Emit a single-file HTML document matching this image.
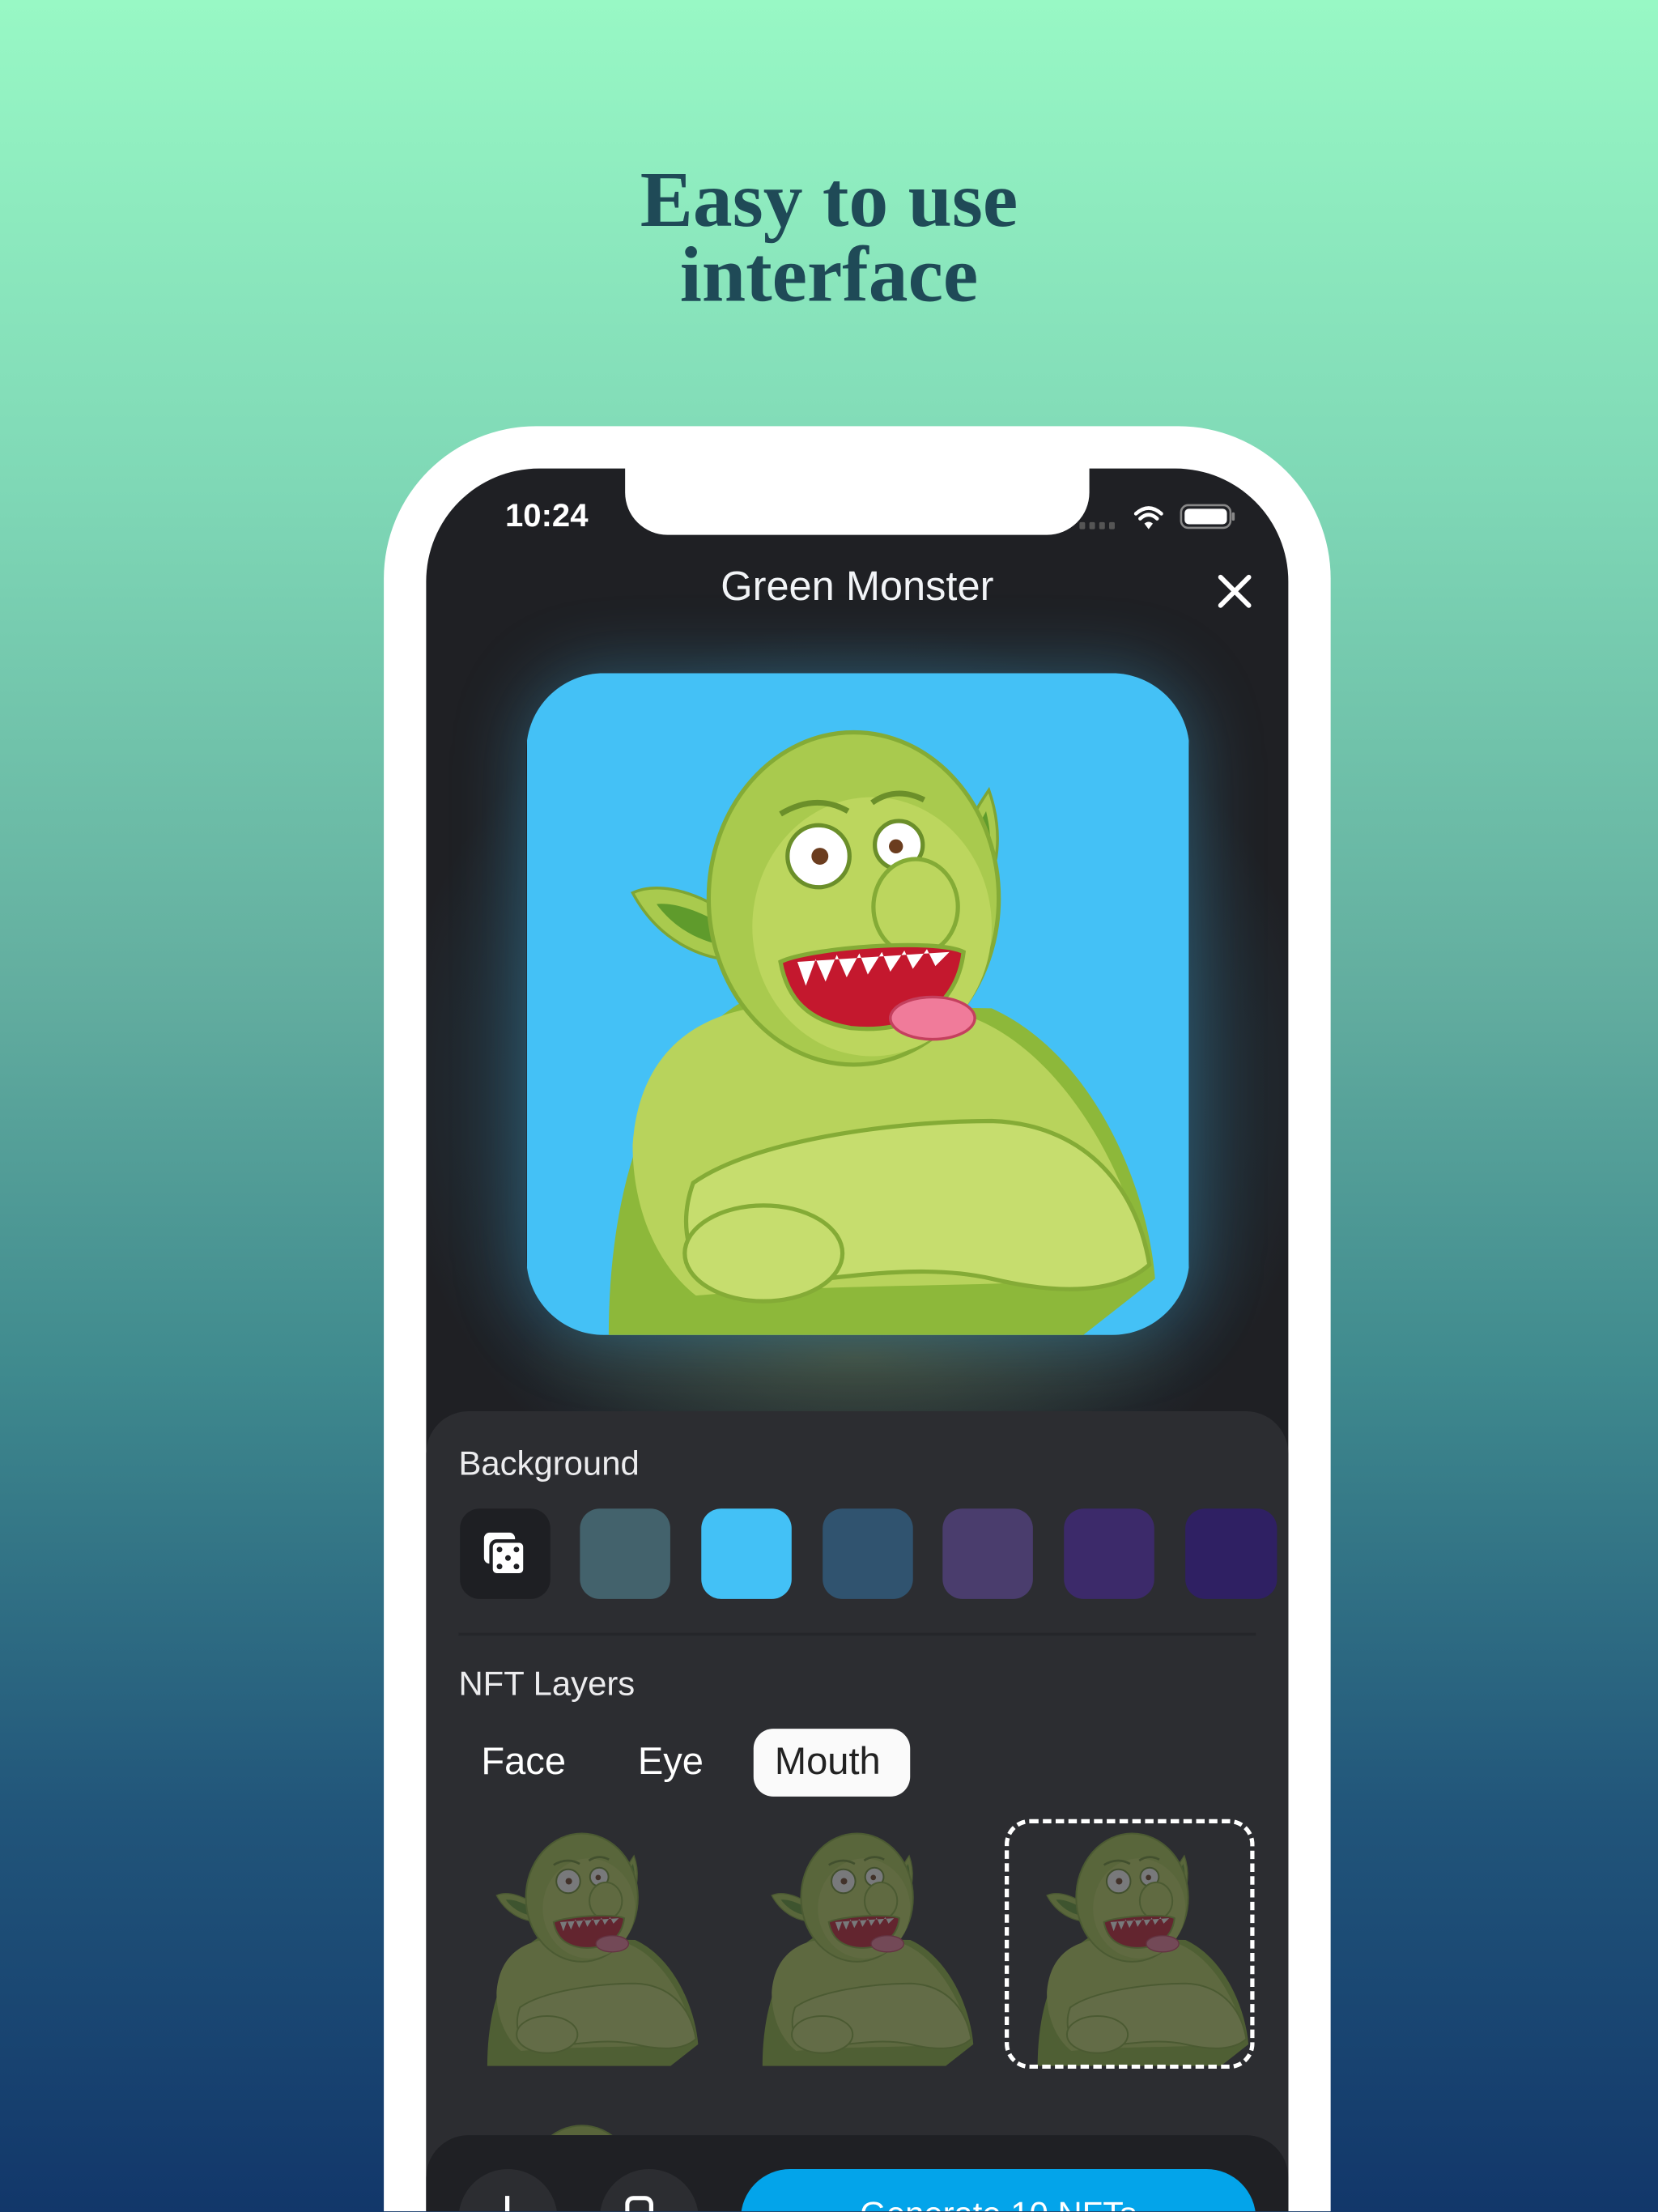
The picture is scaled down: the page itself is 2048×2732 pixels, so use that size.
<!DOCTYPE html>
<html><head><meta charset="utf-8"><style>
*{margin:0;padding:0;box-sizing:border-box}
html,body{width:2048px;height:2732px;overflow:hidden}
#clip{position:relative;width:2048px;height:2732px;overflow:hidden;background:linear-gradient(180deg,#98f8c5 0%,#7fd8b6 22%,#62ad9f 45%,#3f8a8e 62%,#21557a 82%,#12376a 100%);font-family:"Liberation Sans",sans-serif}
#w{position:absolute;left:0;top:0;width:1175px;height:1567px;transform:scale(1.743);transform-origin:0 0;overflow:hidden}
.a{position:absolute}
h1{position:absolute;left:0;width:1175px;top:116px;text-align:center;font-family:"Liberation Serif",serif;font-weight:bold;font-size:56px;line-height:53px;color:#1f4a57}
.t{color:#ececee;font-size:24px;position:absolute}
.sw{position:absolute;top:1069px;width:64px;height:64px;border-radius:14px}
</style></head><body><div id="clip"><div id="w">
<h1>Easy to use<br>interface</h1>
<div class="a" style="left:272px;top:302px;width:671px;height:1265px;background:#fff;border-radius:108px 108px 0 0"></div>
<div class="a" style="left:302px;top:332px;width:611px;height:1235px;background:#1f2024;border-radius:80px 80px 0 0;overflow:hidden">
 <div class="a" style="left:0;top:60px;width:611px;height:700px;background:radial-gradient(ellipse 330px 330px at 305px 380px,#2d5d72 0%,#25404f 45%,rgba(31,32,36,0) 100%)"></div>
 <div class="a" style="left:60px;top:560px;width:490px;height:130px;background:radial-gradient(ellipse 240px 70px at 245px 70px,rgba(90,90,50,.55),rgba(31,32,36,0))"></div>
</div>
<div class="a" style="left:443px;top:320px;width:329px;height:59px;background:#fff;border-radius:0 0 30px 30px"></div>
<div class="a" style="left:358px;top:352px;color:#fff;font-size:23px;font-weight:bold">10:24</div>
<svg class="a" style="left:760px;top:352px" width="120" height="30" viewBox="0 0 120 30">
 <g fill="#555"><rect x="5" y="18" width="4" height="5" rx="1"/><rect x="12" y="18" width="4" height="5" rx="1"/><rect x="19" y="18" width="4" height="5" rx="1"/><rect x="26" y="18" width="4" height="5" rx="1"/></g>
 <g fill="none" stroke="#fff" stroke-width="2.6" stroke-linecap="round"><path d="M45 12 Q54 4 63 12"/><path d="M48 15.5 Q54 10 60 15.5"/></g><path d="M51 19 L54 23 L57 19 Q54 16.5 51 19Z" fill="#fff"/>
 <rect x="77" y="6" width="35" height="16" rx="5" fill="none" stroke="#888" stroke-width="1.5"/><rect x="79.5" y="8.5" width="30" height="11" rx="3" fill="#fff"/><rect x="113" y="11" width="2" height="6" rx="1" fill="#888"/>
</svg>
<div class="a" style="left:302px;width:611px;top:400px;text-align:center;color:#f2f4f7;font-size:29px;font-weight:500">Green Monster</div>
<svg class="a" style="left:862px;top:406px" width="26" height="26"><path d="M3 3L23 23M23 3L3 23" stroke="#fff" stroke-width="3.4" stroke-linecap="round"/></svg>
<svg class="a" style="left:373px;top:477px;border-radius:55px;box-shadow:0 0 50px rgba(70,190,240,.35)" width="470" height="469" viewBox="0 0 470 470">
 <rect width="470" height="470" fill="#44c1f6"/>
 <defs><g id="m">
  <path d="M58 470C58 380 80 280 150 235L330 238C400 270 440 360 446 430L395 470Z" fill="#8db83a"/>
  <path d="M75 335C80 262 130 232 200 236L300 240C362 252 420 330 440 420C400 440 250 430 120 442C92 420 75 380 75 335Z" fill="#b8d35c"/>
  <path d="M118 362C160 332 260 318 330 318C392 320 432 360 442 420C420 440 380 442 330 430C260 414 180 442 130 432C110 412 110 384 118 362Z" fill="#c6dd6e" stroke="#84ab36" stroke-width="3"/>
  <ellipse cx="168" cy="412" rx="56" ry="34" fill="#c6dd6e" stroke="#84ab36" stroke-width="3"/>
  <path d="M145 172C112 150 88 150 75 156C92 188 122 204 152 204Z" fill="#a9ca4e" stroke="#7fa534" stroke-width="2"/>
  <path d="M138 178C115 165 100 163 92 164C105 182 125 192 145 194Z" fill="#5f9b2c"/>
  <path d="M308 125C314 103 322 92 328 83C338 112 336 142 320 162Z" fill="#a9ca4e" stroke="#7fa534" stroke-width="2"/>
  <path d="M314 128C318 112 323 104 326 98C331 118 330 138 322 150Z" fill="#5f9b2c"/>
  <ellipse cx="232" cy="160" rx="103" ry="118" fill="#a9ca4e" stroke="#84ab36" stroke-width="3"/>
  <ellipse cx="245" cy="180" rx="85" ry="92" fill="#bcd65e"/>
  <circle cx="207" cy="130" r="22" fill="#fff" stroke="#6b8f2a" stroke-width="3"/><circle cx="264" cy="122" r="17" fill="#fff" stroke="#6b8f2a" stroke-width="3"/>
  <circle cx="208" cy="130" r="6" fill="#6b3d1f"/><circle cx="262" cy="123" r="5" fill="#6b3d1f"/>
  <path d="M180 100Q205 85 228 98M245 92Q262 80 282 90" stroke="#6b8f2a" stroke-width="4" fill="none"/>
  <ellipse cx="276" cy="166" rx="30" ry="34" fill="#bcd65e" stroke="#84ab36" stroke-width="3"/>
  <path d="M180 205C200 195 290 188 310 198C305 240 270 256 230 252C200 247 185 232 180 205Z" fill="#c4182e" stroke="#84ab36" stroke-width="3"/>
  <path d="M192 205L198 222L205 203L212 219L220 200L227 216L236 199L242 214L252 198L258 212L268 197L274 210L284 196L290 208L300 198Z" fill="#fff"/>
  <ellipse cx="288" cy="245" rx="30" ry="15" fill="#f07b9a" stroke="#c4405e" stroke-width="2"/>
 </g></defs>
 <use href="#m"/>
</svg>
<div class="a" style="left:302px;top:1000px;width:611px;height:567px;background:#2c2d31;border-radius:30px 30px 0 0"></div>
<div class="t" style="left:325px;top:1024px">Background</div>
<div class="sw" style="left:326px;background:#1e1f23"></div>
<svg class="a" style="left:340px;top:1083px" width="36" height="36" viewBox="0 0 36 36"><rect x="3" y="3" width="22" height="22" rx="4" fill="#fff"/><rect x="8" y="9" width="24" height="24" rx="4" fill="#fff" stroke="#1e1f23" stroke-width="2.5"/><g fill="#1e1f23"><circle cx="14" cy="15" r="2"/><circle cx="26" cy="15" r="2"/><circle cx="20" cy="21" r="2"/><circle cx="14" cy="27" r="2"/><circle cx="26" cy="27" r="2"/></g></svg>
<div class="sw" style="left:411px;background:#43626c"></div>
<div class="sw" style="left:497px;background:#43c1f6"></div>
<div class="sw" style="left:583px;background:#30536f"></div>
<div class="sw" style="left:668px;background:#4a3d6d"></div>
<div class="sw" style="left:754px;background:#3c2a6a"></div>
<div class="sw" style="left:840px;width:65px;background:#2f2063"></div>
<div class="a" style="left:325px;top:1157px;width:565px;height:2px;background:#25262a"></div>
<div class="t" style="left:325px;top:1180px">NFT Layers</div>
<div class="a" style="left:534px;top:1225px;width:111px;height:48px;background:#fafafa;border-radius:14px"></div>
<div class="t" style="left:341px;top:1233px;font-size:27px;color:#fff">Face</div>
<div class="t" style="left:452px;top:1233px;font-size:27px;color:#fff">Eye</div>
<div class="t" style="left:549px;top:1233px;font-size:27px;color:#222">Mouth</div>
<svg class="a" style="left:323px;top:1283px;opacity:.36" width="181" height="181" viewBox="0 0 470 470"><use href="#m"/></svg>
<svg class="a" style="left:518px;top:1283px;opacity:.36" width="181" height="181" viewBox="0 0 470 470"><use href="#m"/></svg>
<svg class="a" style="left:713px;top:1283px;opacity:.36" width="181" height="181" viewBox="0 0 470 470"><use href="#m"/></svg>
<div class="a" style="left:712px;top:1289px;width:177px;height:177px;border:3px dashed #fff;border-radius:18px"></div>
<div class="a" style="left:340px;top:1490px;width:140px;height:23px;overflow:hidden"><svg class="a" style="left:-17px;top:0;opacity:.36" width="181" height="181" viewBox="0 0 470 470"><use href="#m"/></svg></div>
<div class="a" style="left:302px;top:1513px;width:611px;height:54px;background:#1f2024;border-radius:30px 30px 0 0;overflow:hidden">
 <div class="a" style="left:23px;top:24px;width:70px;height:70px;border-radius:35px;background:#2c2d31"></div>
 <div class="a" style="left:123px;top:24px;width:70px;height:70px;border-radius:35px;background:#2c2d31"></div>
 <div class="a" style="left:56px;top:43px;width:3px;height:14px;background:#fff"></div>
 <div class="a" style="left:141px;top:43px;width:20px;height:14px;border:3px solid #fff;border-bottom:none;border-radius:6px 6px 0 0"></div>
 <div class="a" style="left:223px;top:24px;width:365px;height:70px;border-radius:35px;background:#03a4ea"></div>
 <div class="a" style="left:223px;width:365px;top:43px;text-align:center;color:#fff;font-size:24px">Generate 10 NFTs</div>
</div>
</div></div></body></html>
